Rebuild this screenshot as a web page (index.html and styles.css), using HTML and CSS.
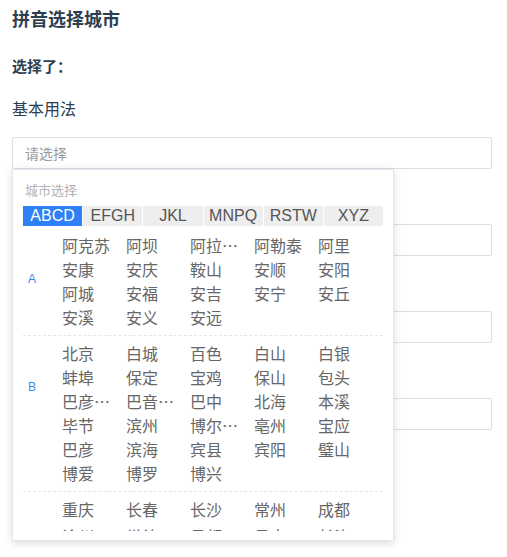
FILE: index.html
```html
<!DOCTYPE html>
<html lang="zh">
<head>
<meta charset="utf-8">
<title>拼音选择城市</title>
<link rel="stylesheet" href="styles.css">
</head>
<body>
<div class="page">
  <h1 class="title">拼音选择城市</h1>
  <div class="selected">选择了：</div>
  <div class="label">基本用法</div>
  <div class="inputs">
    <div class="field">
      <div class="input"><span class="placeholder">请选择</span></div>
      <div class="dropdown">
        <div class="dd-title">城市选择</div>
        <div class="tabs">
          <div class="tab active">ABCD</div>
          <div class="tab">EFGH</div>
          <div class="tab">JKL</div>
          <div class="tab">MNPQ</div>
          <div class="tab">RSTW</div>
          <div class="tab">XYZ</div>
        </div>
        <div class="list">
          <div class="group">
            <div class="letter">A</div>
            <div class="cities">
              <span>阿克苏</span><span>阿坝</span><span>阿拉善盟</span><span>阿勒泰</span><span>阿里</span>
              <span>安康</span><span>安庆</span><span>鞍山</span><span>安顺</span><span>安阳</span>
              <span>阿城</span><span>安福</span><span>安吉</span><span>安宁</span><span>安丘</span>
              <span>安溪</span><span>安义</span><span>安远</span>
            </div>
          </div>
          <div class="group">
            <div class="letter">B</div>
            <div class="cities">
              <span>北京</span><span>白城</span><span>百色</span><span>白山</span><span>白银</span>
              <span>蚌埠</span><span>保定</span><span>宝鸡</span><span>保山</span><span>包头</span>
              <span>巴彦淖尔</span><span>巴音郭楞</span><span>巴中</span><span>北海</span><span>本溪</span>
              <span>毕节</span><span>滨州</span><span>博尔塔拉</span><span>亳州</span><span>宝应</span>
              <span>巴彦</span><span>滨海</span><span>宾县</span><span>宾阳</span><span>璧山</span>
              <span>博爱</span><span>博罗</span><span>博兴</span>
            </div>
          </div>
          <div class="group">
            <div class="letter">C</div>
            <div class="cities">
              <span>重庆</span><span>长春</span><span>长沙</span><span>常州</span><span>成都</span>
              <span>沧州</span><span>常德</span><span>昌都</span><span>昌吉</span><span>长治</span>
            </div>
          </div>
        </div>
      </div>
    </div>
    <div class="field"><div class="input"></div></div>
    <div class="field"><div class="input"></div></div>
    <div class="field"><div class="input"></div></div>
  </div>
</div>
</body>
</html>
```

FILE: styles.css
```css
* { box-sizing: border-box; }
html, body {
  min-height: 557px;
}
body {
  margin: 0;
  background: #fff;
  font-family: "Lato", "Noto Sans CJK SC", sans-serif;
  color: #2c3e50;
}
.page {
  min-height: 557px;
  padding: 7px 15px 0 12px;
}
.title {
  margin: 0;
  font-size: 18px;
  line-height: 24px;
  font-weight: bold;
  color: #2c3e50;
}
.selected {
  margin-top: 24px;
  font-size: 15px;
  line-height: 22px;
  font-weight: bold;
  color: #2c3e50;
}
.label {
  margin-top: 21px;
  font-size: 16px;
  line-height: 22px;
  color: #2c3e50;
}
.inputs {
  margin-top: 17px;
  display: flex;
  flex-direction: column;
  gap: 55px;
}
.field {
  position: relative;
}
.input {
  height: 32px;
  border: 1px solid #dcdfe6;
  border-radius: 2px;
  padding-left: 12px;
  display: flex;
  align-items: center;
  background: #fff;
}
.placeholder {
  font-size: 14px;
  color: #999;
}
.dropdown {
  position: absolute;
  top: 32px;
  left: 0;
  width: 382px;
  height: 372px;
  background: #fff;
  border: 1px solid #e4e7ed;
  box-shadow: 0 2px 8px rgba(0, 0, 0, 0.15);
  padding: 9px 10px 9px 10px;
  display: flex;
  flex-direction: column;
  z-index: 10;
}
.dd-title {
  margin: 2px 0 7px 2px;
  font-size: 13px;
  line-height: 18px;
  color: #b4b4b4;
}
.tabs {
  display: grid;
  grid-template-columns: repeat(6, 1fr);
  gap: 1px;
}
.tab {
  height: 20px;
  line-height: 20px;
  text-align: center;
  background: #eeeeee;
  color: #555;
  font-family: "Liberation Sans", "Noto Sans CJK SC", sans-serif;
  font-size: 16px;
}
.tab.active {
  background: #2f7ff6;
  color: #fff;
}
.list {
  margin-top: 2px;
  flex: 1;
  min-height: 0;
  overflow: hidden;
}
.group {
  display: flex;
  padding: 5px 0 6px;
  border-bottom: 1px dashed #e6e6e6;
}
.letter {
  width: 39px;
  flex: none;
  padding: 38px 0 0 5px;
  font-family: "Liberation Sans", sans-serif;
  font-size: 12px;
  line-height: 16px;
  color: #3a8ee6;
}
.cities {
  display: grid;
  grid-template-columns: repeat(5, 64px);
}
.cities span {
  font-family: "Noto Sans CJK SC", sans-serif;
  font-size: 16px;
  line-height: 24px;
  color: #666666;
  padding-right: 13px;
  white-space: nowrap;
  overflow: hidden;
  text-overflow: ellipsis;
}
```
